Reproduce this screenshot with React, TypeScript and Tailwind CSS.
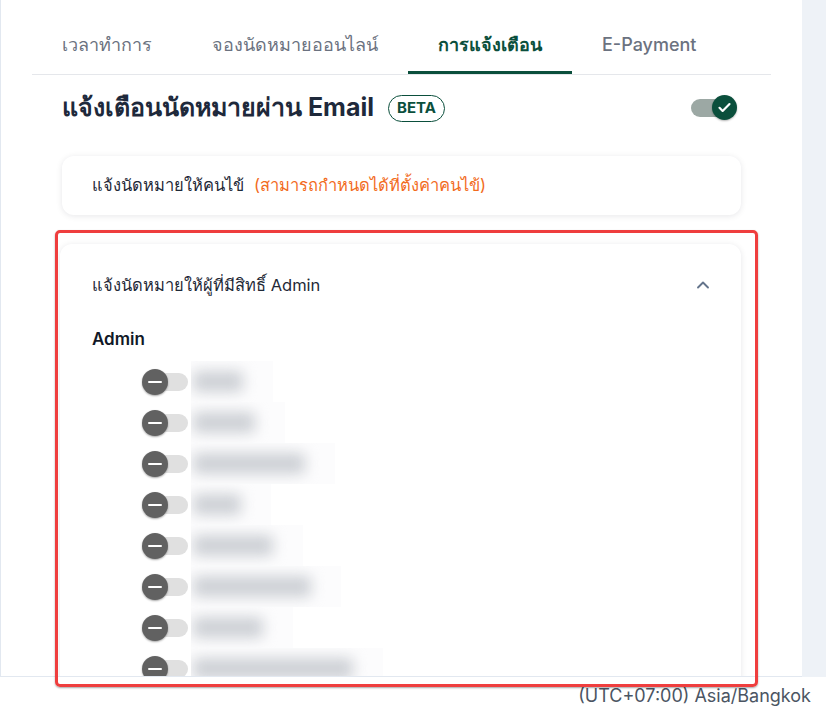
import { ChevronUp } from 'lucide-react';

const admins = [50, 62, 112, 48, 80, 118, 70, 160];

// knob sits over the left of the track, disabled look
function MinusSwitch() {
  return (
    <div className="relative h-[26px] w-[46px] shrink-0">
      <div className="absolute left-[2px] top-[4px] h-[18px] w-[44px] rounded-full bg-[#e0e0e0]" />
      <div className="absolute left-0 top-0 flex h-[26px] w-[26px] items-center justify-center rounded-full bg-[#616161] shadow-[0_1px_2px_rgba(0,0,0,0.35)]">
        <span className="block h-[2px] w-[14px] rounded bg-white" />
      </div>
    </div>
  );
}

function AdminRow({ width }: { width: number }) {
  return (
    <div className="flex h-[41px] items-center pl-[50px]">
      <MinusSwitch />
      <div className="ml-[3px] h-[41px] overflow-hidden bg-[#fcfcfd]" style={{ width: width + 32 }}>
        <div className="ml-[2px] mt-[10px] h-[21px] rounded bg-[#cdd0d5] blur-[7px]" style={{ width }} />
      </div>
    </div>
  );
}

export default function App() {
  return (
    <div className="relative flex h-[707px] w-[826px] flex-col overflow-hidden bg-white font-['Inter','Noto_Sans',sans-serif]">
      <div className="flex h-[677px] shrink-0">
        <main className="flex-1 overflow-hidden border-b border-l border-[#e2e8f0] pl-[31px] pr-[31px] pt-[14px]">
          <nav className="flex border-b border-[#e5e7eb] text-[18px]">
            <div className="flex h-[60px] items-center border-b-[3px] border-transparent px-[30px] pt-[4px] font-medium text-[#6b7280]">เวลาทำการ</div>
            <div className="flex h-[60px] items-center border-b-[3px] border-transparent px-[30px] pt-[4px] font-medium text-[#6b7280]">จองนัดหมายออนไลน์</div>
            <div className="flex h-[60px] items-center border-b-[3px] border-[#0b4f3c] px-[30px] pt-[4px] font-bold text-[#0b4f3c]">การแจ้งเตือน</div>
            <div className="flex h-[60px] items-center border-b-[3px] border-transparent px-[30px] pt-[4px] font-medium text-[#6b7280]">E-Payment</div>
          </nav>

          <div className="px-[30px]">
            <div className="mt-[19px] flex h-[28px] items-center justify-between">
              <div className="flex items-center gap-[14px]">
                <h2 className="text-[25px] font-bold text-[#1e293b]">แจ้งเตือนนัดหมายผ่าน Email</h2>
                <span className="flex h-[27px] w-[57px] items-center justify-center rounded-full border-[1.5px] border-[#0b4f3c] text-[15px] font-bold text-[#0b4f3c]">BETA</span>
              </div>
              <div className="relative mr-[4px] h-[26px] w-[46px]">
                <div className="absolute left-0 top-[4px] h-[18px] w-[36px] rounded-full bg-[#9ca8a4]" />
                <div className="absolute right-0 top-0 flex h-[25px] w-[25px] items-center justify-center rounded-full bg-[#0b4f3c] shadow-[0_1px_2px_rgba(0,0,0,0.3)]">
                  <svg width="15" height="15" viewBox="0 0 24 24" fill="none" stroke="white" strokeWidth="3.5" strokeLinecap="round" strokeLinejoin="round">
                    <path d="M4 12.5l5 5L20 6.5" />
                  </svg>
                </div>
              </div>
            </div>

            <div className="mt-[34px] flex h-[59px] items-center rounded-xl bg-white px-[30px] text-[16.5px] shadow-[0_1px_6px_rgba(15,23,42,0.1)]">
              <span className="text-[#1f2937]">แจ้งนัดหมายให้คนไข้</span>
              <span className="ml-[10px] text-[#f26b1d]">(สามารถกำหนดได้ที่ตั้งค่าคนไข้)</span>
            </div>

            <div className="-ml-[2px] mt-[29px] rounded-xl bg-white pt-[28px] shadow-[0_1px_6px_rgba(15,23,42,0.1)]">
              <div className="flex h-[26px] items-center justify-between pl-[32px] pr-[28px] text-[16.5px] text-[#1f2937]">
                <span>แจ้งนัดหมายให้ผู้ที่มีสิทธิ์ Admin</span>
                <ChevronUp className="h-[20px] w-[20px] text-[#64748b]" strokeWidth={2.25} />
              </div>
              <div className="mt-[31px] flex h-[22px] items-center pl-[32px] text-[17px] font-semibold text-[#111827]">Admin</div>
              <div className="mt-[10px] pl-[32px]">
                {admins.map((w, i) => (
                  <AdminRow key={i} width={w} />
                ))}
              </div>
            </div>
          </div>
        </main>
        <aside className="w-[24px] shrink-0 bg-[#eef2f7]" />
      </div>
      <footer className="flex flex-1 items-end justify-end pr-[15px] text-[18px] leading-[22px] text-[#4b5563]">(UTC+07:00) Asia/Bangkok</footer>

      <div className="pointer-events-none absolute left-[55px] top-[230px] h-[457px] w-[703px] rounded-[5px] border-[3px] border-[#ef3e3e] shadow-[0_1px_2px_rgba(0,0,0,0.35)]" />
    </div>
  );
}
